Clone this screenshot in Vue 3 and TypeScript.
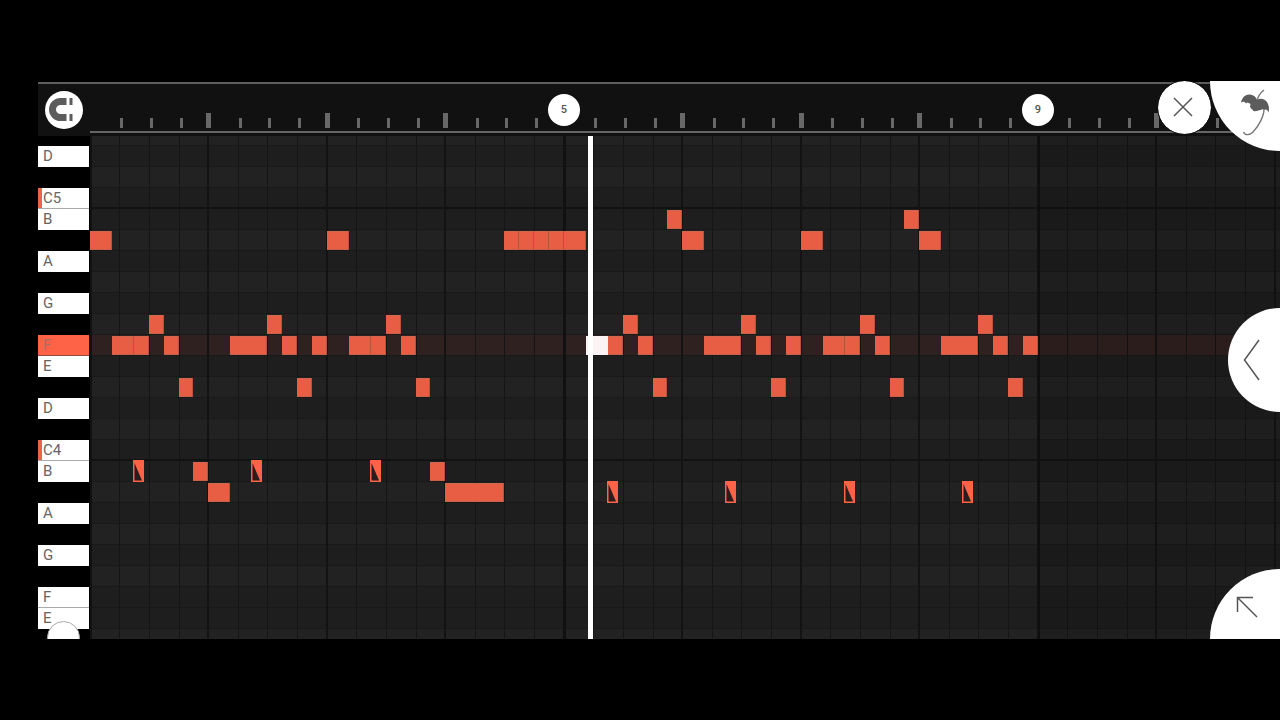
<script setup lang="ts">
interface Note { col: number; len: number; row: number; kind?: 'slide' | 'live' }

const CELL = 29.625
const at = (col: number): number => Math.floor(col * CELL + 0.2)

const names = ['D♯', 'D', 'C♯', 'C5', 'B', 'A♯', 'A', 'G♯', 'G', 'F♯', 'F', 'E', 'D♯', 'D', 'C♯', 'C4', 'B', 'A♯', 'A', 'G♯', 'G', 'F♯', 'F', 'E', 'D♯']
const keys = names.map((name, row) => ({
  name,
  row,
  black: name.includes('♯'),
  octave: name.startsWith('C') && !name.includes('♯'),
  joined: (name === 'F' || name.startsWith('C')) && !name.includes('♯'),
  active: row === 10,
}))

const ticks = Array.from({ length: 39 }, (_, i) => i + 1).filter((i) => i % 16 !== 0)
const lines = Array.from({ length: 41 }, (_, i) => i)
const markers = [{ col: 16, label: '5' }, { col: 32, label: '9' }]

const n = (row: number, col: number, len = 0.5, kind?: Note['kind']): Note => ({ row, col, len, kind })
const notes: Note[] = [
  n(5, 0, 0.75), n(5, 8, 0.75),
  n(5, 14), n(5, 14.5), n(5, 15), n(5, 15.5), n(5, 16, 0.75),
  n(4, 19.5), n(5, 20, 0.75), n(5, 24, 0.75), n(4, 27.5), n(5, 28, 0.75),
  n(10, 0.75, 0.75), n(10, 1.5), n(9, 2), n(10, 2.5), n(12, 3),
  n(10, 4.75, 1.25), n(9, 6), n(10, 6.5), n(12, 7), n(10, 7.5),
  n(10, 8.75, 0.75), n(10, 9.5), n(9, 10), n(10, 10.5), n(12, 11),
  n(10, 16.75, 0.75, 'live'), n(10, 17.5), n(9, 18), n(10, 18.5), n(12, 19),
  n(10, 20.75, 1.25), n(9, 22), n(10, 22.5), n(12, 23), n(10, 23.5),
  n(10, 24.75, 0.75), n(10, 25.5), n(9, 26), n(10, 26.5), n(12, 27),
  n(10, 28.75, 1.25), n(9, 30), n(10, 30.5), n(12, 31), n(10, 31.5),
  n(16, 3.5), n(17, 4, 0.75), n(16, 11.5), n(17, 12, 2),
  n(16, 1.45, 0.37, 'slide'), n(16, 5.45, 0.37, 'slide'), n(16, 9.45, 0.37, 'slide'),
  n(17, 17.45, 0.37, 'slide'), n(17, 21.45, 0.37, 'slide'), n(17, 25.45, 0.37, 'slide'), n(17, 29.45, 0.37, 'slide'),
]
const noteStyle = (note: Note) => ({
  left: `${at(note.col)}px`,
  top: `${note.row * 21 - 10}px`,
  width: `${at(note.col + note.len) - at(note.col)}px`,
})
</script>

<template>
  <main class="app">
    <section class="editor" aria-label="Piano roll">
      <header class="header">
        <div class="corner">
          <button class="snap" type="button" aria-label="Snap">
            <svg viewBox="0 0 38 38" width="38" height="38">
              <path d="M21.500 7H15.500a11.500 11.500 0 0 0 0 23H21.500v-7h-6a4.500 4.500 0 0 1 0-9h6zM24.500 7h3v7h-3zM24.500 23h3v7h-3z" fill="#5c5c5c" />
            </svg>
          </button>
        </div>
        <div class="ruler">
          <span v-for="t in ticks" :key="t" class="tick" :class="{ major: t % 4 === 0 }" :style="{ left: `${at(t)}px` }"></span>
          <span v-for="m in markers" :key="m.label" class="marker" :style="{ left: `${at(m.col)}px` }">{{ m.label }}</span>
        </div>
      </header>
      <div class="body">
        <div class="keys">
          <button
            v-for="k in keys"
            :key="k.row"
            type="button"
            class="key"
            :class="{ black: k.black, octave: k.octave, joined: k.joined, active: k.active }"
            :aria-label="k.name"
          ><template v-if="!k.black">{{ k.name }}</template></button>
          <span class="knob"></span>
        </div>
        <div class="roll">
          <div v-for="k in keys" :key="k.row" class="lane" :class="{ dark: !k.black, active: k.active, octave: k.octave }"></div>
          <span v-for="l in lines" :key="l" class="line" :class="{ beat: l % 4 === 0, bar: l % 16 === 0 }" :style="{ left: `${at(l)}px` }"></span>
          <span class="beyond" :style="{ left: `${at(32)}px` }"></span>
          <span v-for="(note, i) in notes" :key="i" class="note" :class="note.kind" :style="noteStyle(note)">
            <svg v-if="note.kind === 'slide'" viewBox="0 0 10 22" width="10" height="22">
              <path d="M1.500 3L9 20.500H1.500z" fill="#2b1d1b" />
            </svg>
          </span>
          <span class="playhead" :style="{ left: `${at(16.875)}px` }"></span>
        </div>
      </div>
      <button class="round close" type="button" aria-label="Close">
        <svg viewBox="0 0 53 53" width="53" height="53"><path d="M16 17L34 35M34 17L16 35" stroke="#555" stroke-width="1.5" fill="none" /></svg>
      </button>
      <button class="round menu" type="button" aria-label="Tools">
        <svg viewBox="0 0 70 70" width="70" height="70">
          <path d="M47 20C48 15 50 12 54 9" stroke="#777" stroke-width="1.4" fill="none" />
          <path d="M31 21.500C32 16 36 13 40 13.500C44 14 46 16 47 19C50 17 54 17.500 57 21C59 24 59.500 28 58.500 31.500C57.500 29 56 28 54.500 29C53 28 52 28 50.500 29C48 29 46 31 43.500 30C42.500 28 40.500 28 40 25.500C41 23 40 21.500 39 22.500C38 21 37 21 36 22.500C35 20.500 33 20.500 31 21.500Z" fill="#5c5c5c" />
          <path d="M54 28C54 35 49 45 43 51C40 54 35 55 33.500 51" stroke="#777" stroke-width="1.400" fill="none" />
        </svg>
      </button>
      <button class="round back" type="button" aria-label="Open panel">
        <svg viewBox="0 0 52 104" width="52" height="104"><path d="M31 32L16.500 52L31 72" stroke="#555" stroke-width="1.5" fill="none" /></svg>
      </button>
      <button class="round expand" type="button" aria-label="Expand">
        <svg viewBox="0 0 70 70" width="70" height="70"><path d="M47 48L28 29M27.500 43V28.500H43" stroke="#555" stroke-width="1.5" fill="none" /></svg>
      </button>
    </section>
  </main>
</template>

<style>
html, body { background: #000; }
</style>

<style scoped>
* { box-sizing: border-box; }
.app { min-height: 100vh; padding: 81px 0 81px 38px; background: #000; font-family: Roboto, "Liberation Sans", sans-serif; overflow: hidden; }
button { font: inherit; border: 0; margin: 0; padding: 0; }
svg { display: block; }
.editor { position: relative; overflow: hidden; }
.header { display: grid; grid-template-columns: 52px 1fr; height: 55px; background: #111; border-top: 1px solid #000; box-shadow: inset 0 2px #5d5d5d; }
.corner { display: flex; align-items: center; padding: 2px 0 0 7px; }
.snap { width: 38px; height: 38px; border-radius: 50%; background: #fff; overflow: hidden; }
.ruler { position: relative; border-bottom: 3px solid #101010; box-shadow: inset 0 -2px #666; }
.tick { position: absolute; bottom: 5px; width: 3px; height: 10px; margin-left: 1px; background: #686868; }
.tick.major { width: 5px; height: 15px; margin-left: -2px; }
.marker { position: absolute; top: 12px; width: 32px; height: 32px; margin-left: -16px; border-radius: 50%; background: #fff; color: #555; font-size: 11px; font-weight: 500; line-height: 32px; text-align: center; }
.body { display: grid; grid-template-columns: 52px 1fr; }
.keys { position: relative; height: 503px; overflow: hidden; padding-right: 1px; }
.key { display: block; width: 100%; height: 21px; padding-left: 5px; background: #fff; color: #666; font-size: 15px; line-height: 21px; text-align: left; }
.key.black { background: #000; }
.key:first-child { height: 10px; }
.key.joined { border-bottom: 1px solid #aaa; }
.key.octave { box-shadow: inset 4px 0 #e8644a; }
.key.active { background: #ff6347; color: #a5705f; border-bottom-color: #8f4a3c; }
.knob { position: absolute; left: 9px; top: 485px; width: 33px; height: 33px; border-radius: 50%; background: #fff; border: 1px solid #aaa; }
.roll { position: relative; height: 503px; overflow: hidden; background: #222; }
.lane { height: 21px; background: #222; border-bottom: 1px solid #191919; }
.lane:first-child { height: 10px; }
.lane.dark { background: #1e1e1e; }
.lane.octave { border-bottom: 2px solid #121212; }
.lane.active { background: #2f211f; }
.line { position: absolute; top: 0; bottom: 0; width: 1px; background: #151515; }
.line.beat { width: 2px; margin-left: -1px; background: #131313; }
.line.bar { width: 3px; background: #111; }
.beyond { position: absolute; top: 0; bottom: 0; right: 0; background: #000; opacity: 0.1; }
.note { position: absolute; height: 19px; background: #e85e44; box-shadow: inset -1px 0 #b9533f, inset 0 -1px #c9614b, inset 0 1px #cf6650; }
.note.live { background: #fbf2f3; box-shadow: none; }
.note.slide { height: 22px; margin-top: -2px; background: #ff6347; box-shadow: none; }
.playhead { position: absolute; top: 0; bottom: 0; width: 5px; margin-left: -2px; background: #fff; }
.round { position: absolute; background: #fff; overflow: hidden; }
.close { right: 69px; top: 0; width: 53px; height: 53px; border-radius: 50%; outline: 1px solid #111; }
.menu { right: 0; top: 0; width: 70px; height: 70px; border-radius: 0 0 0 70px; }
.back { right: 0; top: 227px; width: 52px; height: 104px; border-radius: 52px 0 0 52px; }
.expand { right: 0; bottom: 0; width: 70px; height: 70px; border-radius: 70px 0 0 0; }
</style>
